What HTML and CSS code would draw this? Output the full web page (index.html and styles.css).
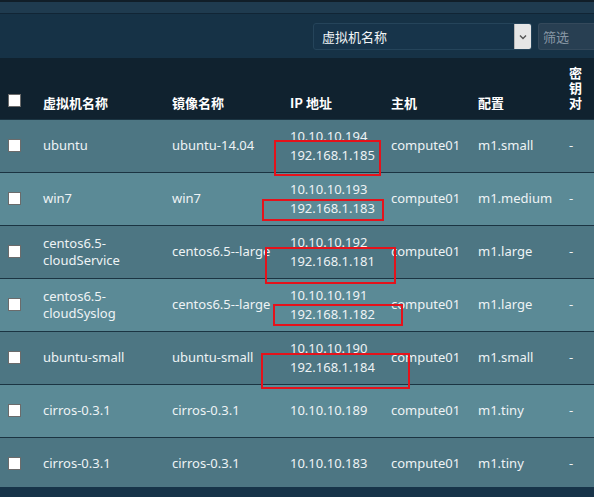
FILE: index.html
```html
<!DOCTYPE html>
<html lang="zh">
<head>
<meta charset="utf-8">
<title>虚拟机列表</title>
<link rel="stylesheet" href="styles.css">
</head>
<body>
<div class="page">
  <div class="topline"></div>
  <div class="band"></div>
  <div class="toolbar">
    <div class="select">
      <span class="select-label">虚拟机名称</span>
      <span class="select-btn">
        <svg width="8" height="6" viewBox="0 0 8 6"><path d="M1 1.5 L4 4.5 L7 1.5" fill="none" stroke="#555" stroke-width="1.4"/></svg>
      </span>
    </div>
    <div class="filter"><span class="placeholder">筛选</span></div>
  </div>
  <div class="table-wrap">
    <table class="grid">
      <colgroup>
        <col class="c-check"><col class="c-name"><col class="c-image"><col class="c-ip"><col class="c-host"><col class="c-flavor"><col class="c-key">
      </colgroup>
      <thead>
        <tr>
          <th class="th-check"><span class="box"></span></th>
          <th>虚拟机名称</th>
          <th>镜像名称</th>
          <th>IP 地址</th>
          <th>主机</th>
          <th>配置</th>
          <th class="th-key">密钥对</th>
        </tr>
      </thead>
      <tbody>
        <tr class="odd">
          <td class="td-check"><span class="box"></span></td>
          <td>ubuntu</td><td class="nw">ubuntu-14.04</td>
          <td class="ip">10.10.10.194<br>192.168.1.185</td>
          <td>compute01</td><td>m1.small</td><td>-</td>
        </tr>
        <tr class="even">
          <td class="td-check"><span class="box"></span></td>
          <td>win7</td><td class="nw">win7</td>
          <td class="ip">10.10.10.193<br>192.168.1.183</td>
          <td>compute01</td><td>m1.medium</td><td>-</td>
        </tr>
        <tr class="odd">
          <td class="td-check"><span class="box"></span></td>
          <td class="name2">centos6.5-<br>cloudService</td><td class="nw">centos6.5--large</td>
          <td class="ip">10.10.10.192<br>192.168.1.181</td>
          <td>compute01</td><td>m1.large</td><td>-</td>
        </tr>
        <tr class="even">
          <td class="td-check"><span class="box"></span></td>
          <td class="name2">centos6.5-<br>cloudSyslog</td><td class="nw">centos6.5--large</td>
          <td class="ip">10.10.10.191<br>192.168.1.182</td>
          <td>compute01</td><td>m1.large</td><td>-</td>
        </tr>
        <tr class="odd">
          <td class="td-check"><span class="box"></span></td>
          <td>ubuntu-small</td><td class="nw">ubuntu-small</td>
          <td class="ip">10.10.10.190<br>192.168.1.184</td>
          <td>compute01</td><td>m1.small</td><td>-</td>
        </tr>
        <tr class="even">
          <td class="td-check"><span class="box"></span></td>
          <td>cirros-0.3.1</td><td class="nw">cirros-0.3.1</td>
          <td class="ip">10.10.10.189</td>
          <td>compute01</td><td>m1.tiny</td><td>-</td>
        </tr>
        <tr class="odd">
          <td class="td-check"><span class="box"></span></td>
          <td>cirros-0.3.1</td><td class="nw">cirros-0.3.1</td>
          <td class="ip">10.10.10.183</td>
          <td>compute01</td><td>m1.tiny</td><td>-</td>
        </tr>
      </tbody>
    </table>
  </div>
  <div class="footer-band"></div>

  <div class="mark" style="left:274px;top:140px;width:107px;height:36px"></div>
  <div class="mark" style="left:262px;top:199px;width:122px;height:22px"></div>
  <div class="mark" style="left:265px;top:247px;width:131px;height:37px"></div>
  <div class="mark" style="left:273px;top:304px;width:130px;height:22px"></div>
  <div class="mark" style="left:261px;top:353px;width:149px;height:36px"></div>
</div>
</body>
</html>
```
FILE: styles.css
```css
* { box-sizing: border-box; }
html, body {
  margin: 0;
  padding: 0;
  background: #173449;
}
body {
  font-family: "Noto Sans", "Noto Sans CJK SC", sans-serif;
  font-size: 13px;
  color: #eef3f5;
  overflow: hidden;
}
.page {
  position: relative;
  width: 594px;
  height: 497px;
  overflow: hidden;
}
.topline { height: 2px; background: #111e28; }
.band {
  height: 12px;
  background: #1f3b4f;
  border-bottom: 1px solid #112535;
}
.toolbar {
  height: 44px;
  background: #163246;
  display: flex;
  align-items: flex-start;
  padding: 9px 0 0 313px;
  gap: 6px;
}
.select {
  width: 219px;
  height: 27px;
  border: 1px solid #25445a;
  border-radius: 3px;
  background: #17344a;
  display: flex;
  align-items: center;
  justify-content: space-between;
  overflow: hidden;
}
.select-label {
  padding-left: 8px;
  font-family: "Noto Sans CJK SC", sans-serif;
  font-size: 13px;
  color: #f2f5f7;
}
.select-btn {
  width: 17px;
  height: 25px;
  background: #e6e6e6;
  border-left: 1px solid #b8b8b8;
  display: flex;
  align-items: center;
  justify-content: center;
}
.filter {
  flex: 1;
  height: 27px;
  border: 1px solid #34495b;
  border-right: none;
  border-radius: 3px 0 0 3px;
  background: #283f52;
  display: flex;
  align-items: center;
  padding-left: 4px;
}
.placeholder {
  font-family: "Noto Sans CJK SC", sans-serif;
  font-size: 13px;
  color: #8898a6;
}
.table-wrap {
  height: 429px;
  overflow: hidden;
}
.grid {
  width: 594px;
  table-layout: fixed;
  border-collapse: collapse;
}
.c-check { width: 43px; }
.c-name { width: 129px; }
.c-image { width: 118px; }
.c-ip { width: 101px; }
.c-host { width: 87px; }
.c-flavor { width: 91px; }
.c-key { width: 25px; }
thead tr {
  height: 61px;
  background: #10222f;
}
th {
  text-align: left;
  vertical-align: bottom;
  font-family: "Noto Sans CJK SC", sans-serif;
  font-weight: bold;
  font-size: 13px;
  line-height: 15px;
  padding: 0 0 9px 0;
  color: #ffffff;
  white-space: nowrap;
}
th.th-key {
  white-space: normal;
  word-break: break-all;
  padding-right: 10px;
}
th.th-check { padding-bottom: 12px; }
.box {
  display: block;
  width: 13px;
  height: 13px;
  margin-left: 8px;
  background: #ffffff;
  border: 1px solid #6b6b6b;
}
tbody tr { height: 53px; border-top: 1px solid #1b3442; }
tbody tr.odd { background: #4d7683; }
tbody tr.even { background: #5b8a96; }
td {
  padding: 0;
  vertical-align: middle;
  line-height: 17px;
  white-space: nowrap;
  overflow: visible;
}
td.name2 { line-height: 17px; }
td.ip { line-height: 19px; }
.mark {
  position: absolute;
  border: 2px solid #e5121b;
  pointer-events: none;
}
.footer-band {
  height: 10px;
  background: #173449;
}
```
